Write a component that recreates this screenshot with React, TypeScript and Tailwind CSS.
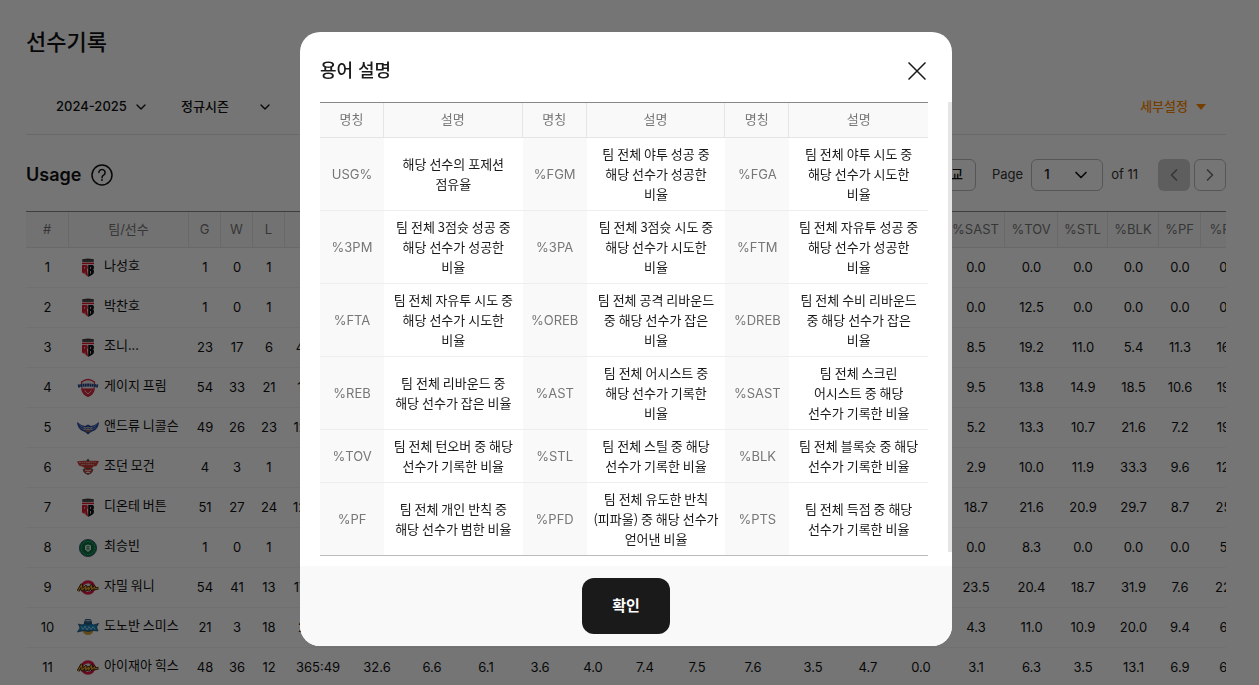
import { useState } from 'react';
import { ChevronDown, ChevronLeft, ChevronRight } from 'lucide-react';

type Team = 'sono' | 'phoebus' | 'kcc' | 'redboosters' | 'db' | 'knights' | 'lakers';

type Player = {
  rank: number;
  team: Team;
  name: string;
  stats: string[];
};

const COLUMNS: { label: string; width: string }[] = [
  { label: 'G', width: 'w-8' },
  { label: 'W', width: 'w-8' },
  { label: 'L', width: 'w-8' },
  { label: 'MIN', width: 'w-[66px]' },
  { label: 'USG%', width: 'w-[52px]' },
  { label: '%FGM', width: 'w-[58px]' },
  { label: '%FGA', width: 'w-[50px]' },
  { label: '%3PM', width: 'w-[58px]' },
  { label: '%3PA', width: 'w-[48px]' },
  { label: '%FTM', width: 'w-[56px]' },
  { label: '%FTA', width: 'w-[48px]' },
  { label: '%OREB', width: 'w-[64px]' },
  { label: '%DREB', width: 'w-[56px]' },
  { label: '%REB', width: 'w-[54px]' },
  { label: '%AST', width: 'w-[52px]' },
  { label: '%SAST', width: 'w-[58px]' },
  { label: '%TOV', width: 'w-[53px]' },
  { label: '%STL', width: 'w-[50px]' },
  { label: '%BLK', width: 'w-[51px]' },
  { label: '%PF', width: 'w-[42px]' },
  { label: '%PFD', width: 'w-[56px]' },
  { label: '%PTS', width: 'w-[56px]' },
];

const row = (rank: number, team: Team, name: string, stats: string): Player => ({
  rank,
  team,
  name,
  stats: stats.split(' '),
});

const PLAYERS: Player[] = [
  row(1, 'redboosters', '나성호', '1 0 1 1:12 50.0 0.0 9.1 0.0 0.0 0.0 0.0 0.0 0.0 0.0 0.0 0.0 0.0 0.0 0.0 0.0 0.0 0.0'),
  row(2, 'redboosters', '박찬호', '1 0 1 2:31 40.0 0.0 8.3 0.0 9.1 0.0 0.0 0.0 0.0 0.0 0.0 0.0 12.5 0.0 0.0 0.0 0.0 0.0'),
  row(3, 'redboosters', '조니...', '23 17 6 430:26 34.3 17.4 17.2 8.8 8.4 18.5 17.6 14.9 17.1 16.4 9.9 8.5 19.2 11.0 5.4 11.3 16.4 16.8'),
  row(4, 'phoebus', '게이지 프림', '54 33 21 1143:11 34.1 20.2 17.1 2.1 2.5 24.6 26.3 16.8 19.9 18.8 9.1 9.5 13.8 14.9 18.5 10.6 19.6 16.5'),
  row(5, 'kcc', '앤드류 니콜슨', '49 26 23 1228:36 33.9 24.3 21.9 19.7 16.4 21.2 18.8 11.6 21.3 18.4 5.8 5.2 13.3 10.7 21.6 7.2 19.2 23.1'),
  row(6, 'sono', '조던 모건', '4 3 1 31:17 33.5 14.8 13.9 0.0 0.0 9.5 12.1 12.8 14.6 14.0 4.2 2.9 10.0 11.9 33.3 9.6 12.4 11.7'),
  row(7, 'redboosters', '디온테 버튼', '51 27 24 1230:44 33.2 20.7 20.1 15.2 14.3 22.5 22.9 10.8 16.8 15.1 18.4 18.7 21.6 20.9 29.7 8.7 25.3 20.1'),
  row(8, 'db', '최승빈', '1 0 1 06:32 33.0 8.3 8.0 0.0 0.0 0.0 0.0 0.0 7.7 5.3 0.0 0.0 8.3 0.0 0.0 0.0 5.3 4.2'),
  row(9, 'knights', '자밀 워니', '54 41 13 1790:56 32.8 28.4 26.2 17.5 17.0 19.3 20.4 18.8 27.1 24.5 21.2 23.5 20.4 18.7 31.9 7.6 22.4 26.1'),
  row(10, 'lakers', '도노반 스미스', '21 3 18 221:07 32.7 8.1 8.4 2.2 2.8 6.7 8.0 7.9 7.6 7.7 4.6 4.3 11.0 10.9 20.0 9.4 6.8 7.4'),
  row(11, 'knights', '아이재아 힉스', '48 36 12 365:49 32.6 6.6 6.1 3.6 4.0 7.4 7.5 7.6 3.5 4.7 0.0 3.1 6.3 3.5 13.1 6.9 6.2 6.0'),
];

// 한 행에 [명칭, 설명] 세 쌍
const TERMS: [string, string][][] = [
  [
    ['USG%', '해당 선수의 포제션\n점유율'],
    ['%FGM', '팀 전체 야투 성공 중\n해당 선수가 성공한\n비율'],
    ['%FGA', '팀 전체 야투 시도 중\n해당 선수가 시도한\n비율'],
  ],
  [
    ['%3PM', '팀 전체 3점슛 성공 중\n해당 선수가 성공한\n비율'],
    ['%3PA', '팀 전체 3점슛 시도 중\n해당 선수가 시도한\n비율'],
    ['%FTM', '팀 전체 자유투 성공 중\n해당 선수가 성공한\n비율'],
  ],
  [
    ['%FTA', '팀 전체 자유투 시도 중\n해당 선수가 시도한\n비율'],
    ['%OREB', '팀 전체 공격 리바운드\n중 해당 선수가 잡은\n비율'],
    ['%DREB', '팀 전체 수비 리바운드\n중 해당 선수가 잡은\n비율'],
  ],
  [
    ['%REB', '팀 전체 리바운드 중\n해당 선수가 잡은 비율'],
    ['%AST', '팀 전체 어시스트 중\n해당 선수가 기록한\n비율'],
    ['%SAST', '팀 전체 스크린\n어시스트 중 해당\n선수가 기록한 비율'],
  ],
  [
    ['%TOV', '팀 전체 턴오버 중 해당\n선수가 기록한 비율'],
    ['%STL', '팀 전체 스틸 중 해당\n선수가 기록한 비율'],
    ['%BLK', '팀 전체 블록슛 중 해당\n선수가 기록한 비율'],
  ],
  [
    ['%PF', '팀 전체 개인 반칙 중\n해당 선수가 범한 비율'],
    ['%PFD', '팀 전체 유도한 반칙\n(피파울) 중 해당 선수가\n얻어낸 비율'],
    ['%PTS', '팀 전체 득점 중 해당\n선수가 기록한 비율'],
  ],
];

const TeamLogo = ({ team }: { team: Team }) => (
  <svg viewBox="0 0 22 22" className="size-[22px] shrink-0" aria-hidden="true">
    {team === 'redboosters' && (
      <>
        <path d="M5 2.500l2-.6 4-.4 4 .4 2 .6-.6 2.500H5.600z" fill="#333" />
        <path d="M6.500 3.300h9M6 4.400h10" stroke="#999" strokeWidth=".5" strokeDasharray="1 .6" />
        <path d="M5 5.600h12v1.600H5z" fill="#d9182d" />
        <path d="M5 8h4.400q1.400 0 1.400 2.400 0 1.600-.8 2.200l1 7L8.600 18l-.8-4.600v3.600L5 15.500z" fill="#d9182d" />
        <path d="M11.200 8h4.200q1.600 0 1.600 2.200 0 1.700-.8 2.200.8.5.8 2.300 0 2-1.800 3.100l-4 2.200z" fill="#111" />
        <path d="M7.700 9.800v2M13.500 9.800v2M13.500 14v2.600" stroke="#ddd" strokeWidth=".9" />
      </>
    )}
    {team === 'phoebus' && (
      <>
        <path d="M4.500 5Q11 0 17.500 5L17 13q-1 4-6 6.500Q6 17 5 13z" fill="#e8e8e8" stroke="#d4283c" strokeWidth="1.300" />
        <path d="M5 11.500h12q-.5 5-6 8-5.500-3-6-8z" fill="#d4283c" />
        <path d="M7.500 13.500l3.500 3.500 3.500-3.500" stroke="#eee" strokeWidth=".8" fill="none" />
        <path d="M1 9.200q10-1.800 20 0" stroke="#e8e8e8" strokeWidth="3.600" fill="none" />
        <path d="M1 9q10-1.800 20 0" stroke="#213d86" strokeWidth="3" strokeDasharray="1.800 .5" fill="none" />
      </>
    )}
    {team === 'kcc' && (
      <>
        <path d="M0 5q4 3.500 8 4l3-1.500L14 9q4-.5 8-4-.5 6-4.500 8.500L14 15l-3 2.500L8 15l-3.500-1.500Q.5 11 0 5z" fill="#294a9c" />
        <path d="M2 7.500q3 3 6 3M3.500 10.500q2 2 4.500 2M20 7.500q-3 3-6 3M18.500 10.500q-2 2-4.500 2" stroke="#9fb1dc" strokeWidth=".7" fill="none" />
        <circle cx="11" cy="12.500" r="2.800" fill="#8b6a52" />
        <path d="M7 10.500h8v2H7z" fill="#d8dbe4" />
        <path d="M7.500 11.500h7" stroke="#294a9c" strokeWidth="1" strokeDasharray="1 .5" />
      </>
    )}
    {team === 'sono' && (
      <>
        <path d="M9 4l2-2.500L13 4z" fill="#555" />
        <path d="M0 4.500q5-1 11-.5 6-.5 11 0L19.500 9l-3 .5L14 12H8L6.500 10 2 8.500z" fill="#c63b35" />
        <path d="M2 5.700q5-.8 9-.3 4-.5 8 0M4 7.800q7-1 13 0" stroke="#e3c3bd" strokeWidth=".9" strokeDasharray="1.600 .7" fill="none" />
        <path d="M6 12.500q5-3 10 0-.5 4-5 5-4.500-1-5-5z" fill="#c63b35" stroke="#555" strokeWidth=".8" />
        <path d="M8 13l3 1 3-1M9 15.500h4" stroke="#eee" strokeWidth=".9" fill="none" />
      </>
    )}
    {team === 'db' && (
      <>
        <circle cx="11" cy="11" r="8.600" fill="#087a46" stroke="#29405c" strokeWidth=".8" />
        <circle cx="11" cy="11" r="6.800" fill="none" stroke="#7cc1a0" strokeWidth=".8" strokeDasharray=".8 1" />
        <circle cx="11" cy="11" r="5.200" fill="#0b6b3f" />
        <path d="M8 8.500l3-1 3 1v4l-3 2.500-3-2.500z" fill="#dfe9e4" />
        <path d="M9 9.800h4M9 11.800h4M11 8.500v5" stroke="#087a46" strokeWidth=".7" />
      </>
    )}
    {team === 'knights' && (
      <>
        <circle cx="11" cy="10.500" r="6" fill="#e9e4e4" stroke="#df1743" strokeWidth="2.600" />
        <path d="M7.500 7q3.500-2 7 0M7.500 14.500q3.500 2 7 0" stroke="#df1743" strokeWidth=".8" fill="none" />
        <path d="M1 14l3.500-6 .5 5 4-3.500-.5 3.500 3-2.500v2.500l3-4.500.2 4 2.800-2.500.5 2 3.500-1" stroke="#2d1d17" strokeWidth="2.800" fill="none" strokeLinejoin="round" />
        <path d="M1 14l3.500-6 .5 5 4-3.500-.5 3.500 3-2.500v2.500l3-4.500.2 4 2.800-2.500.5 2 3.500-1" stroke="#eda525" strokeWidth="1.200" fill="none" strokeLinejoin="round" />
      </>
    )}
    {team === 'lakers' && (
      <>
        <path d="M7 4.500l1.500-2.500h5L15 4.500v4H7z" fill="#386086" />
        <path d="M8.500 3.700h5" stroke="#c5d7e3" strokeWidth="1" />
        <circle cx="11" cy="12.500" r="5.500" fill="#d6a23c" />
        <path d="M1.500 7L5 8l3-1.500 3 1 3-1L16.500 8l5-1.500L19.500 10l1.500 4-5-.5-5 1-4-1L.5 15 3 11z" fill="#1682bd" stroke="#173c60" strokeWidth=".7" />
        <path d="M4 9.500l2 3 2-3.500 2 4 2-3.500 2 3 2-3 2 3" stroke="#b3ddea" strokeWidth=".8" fill="none" />
      </>
    )}
  </svg>
);

const PlayerTable = () => (
  <div className="overflow-hidden">
    <table className="w-[1287px] table-fixed border-separate border-spacing-0 border-t border-[#888] text-center text-[13px]">
      <thead>
        <tr className="h-9 bg-[#f9f9f9] text-[#777]">
          <th className="w-[43px] border-r border-b border-[#e5e5e5] font-normal">#</th>
          <th className="w-[120px] border-r border-b border-[#e5e5e5] font-normal">팀/선수</th>
          {COLUMNS.map((col) => (
            <th key={col.label} className={`${col.width} border-r border-b border-[#e5e5e5] font-normal`}>
              {col.label}
            </th>
          ))}
        </tr>
      </thead>
      <tbody>
        {PLAYERS.map((player) => (
          <tr key={player.rank} className="h-10 text-[#111]">
            <td className="border-b border-[#f5f5f5]">{player.rank}</td>
            <td className="border-b border-[#f5f5f5] pl-2">
              <a href="#player" className="flex items-center gap-[5px] font-['Noto_Sans_CJK_KR',sans-serif] whitespace-nowrap">
                <TeamLogo team={player.team} />
                <span className="pb-1.5">{player.name}</span>
              </a>
            </td>
            {player.stats.map((value, i) => (
              <td key={COLUMNS[i].label} className="border-b border-[#f5f5f5]">{value}</td>
            ))}
          </tr>
        ))}
      </tbody>
    </table>
  </div>
);

const TermsModal = ({ onClose }: { onClose: () => void }) => (
  <div className="fixed inset-0 flex items-start justify-center bg-black/54 pt-8 pr-[7px]">
    <div
      role="dialog"
      aria-modal="true"
      aria-labelledby="terms-title"
      className="w-[652px] overflow-hidden rounded-[20px] bg-white text-[#1a1a1a]"
    >
      <header className="flex h-[70px] items-center justify-between px-5 pt-2">
        <h2 id="terms-title" className="text-lg font-medium">용어 설명</h2>
        <button onClick={onClose} aria-label="닫기" className="p-1.5">
          <svg viewBox="0 0 18 18" className="size-[18px]" fill="none" stroke="#1a1a1a" strokeWidth="1.500">
            <path d="M.5.5l17 17M17.500.5l-17 17" />
          </svg>
        </button>
      </header>

      <div className="relative pr-6 pb-2.5 pl-5">
        <table className="w-full table-fixed border-separate border-spacing-0 border-t border-b border-t-[#888] border-b-[#bbb] text-center text-[13px] leading-5">
          <thead>
            <tr className="h-[35px] bg-[#f9f9f9] font-['Noto_Sans_CJK_KR',sans-serif] text-[#777]">
              {[0, 1, 2].map((i) => [
                <th key={`name-${i}`} className="w-16 border-r border-b border-[#e5e5e5] pb-0.5 font-normal">명칭</th>,
                <th
                  key={`desc-${i}`}
                  className={`border-b border-[#e5e5e5] pb-0.5 font-normal ${i < 2 ? 'border-r' : ''}`}
                >
                  설명
                </th>,
              ])}
            </tr>
          </thead>
          <tbody>
            {TERMS.map((terms, i) => {
              const line = i < TERMS.length - 1 ? 'border-b border-[#eee]' : '';
              return (
                <tr key={terms[0][0]}>
                  {terms.map(([name, desc]) => [
                    <th key={name} className={`bg-[#f9f9f9] font-normal text-[#777] ${line}`}>{name}</th>,
                    <td
                      key={`${name}-desc`}
                      className={`py-1.5 font-['Noto_Sans_CJK_KR',sans-serif] whitespace-pre-line ${line}`}
                    >
                      {desc}
                    </td>,
                  ])}
                </tr>
              );
            })}
          </tbody>
        </table>
        {/* 스크롤 표시 */}
        <div className="absolute top-0 right-0 bottom-3.5 w-1 bg-[#e5e5e5]" />
      </div>

      <footer className="flex justify-center bg-[#f9f9f9] py-3">
        <button onClick={onClose} className="h-14 w-[88px] rounded-xl bg-[#1a1a1a] text-[15px] font-bold text-white">
          확인
        </button>
      </footer>
    </div>
  </div>
);

export default function App() {
  const [open, setOpen] = useState(true);

  return (
    <div className="h-screen overflow-hidden bg-white font-['Inter','Noto_Sans_CJK_KR',sans-serif] text-[#111]">
      <main className="pt-6 pr-[33px] pl-[26px]">
        <h1 className="text-[22px] leading-9 font-medium">선수기록</h1>

        {/* --- 필터 --- */}
        <div className="mt-5 flex h-[55px] items-center justify-between border-b border-[#e5e5e5] pr-5 pl-[30px] text-[13px] font-medium">
          <div className="flex items-center gap-8">
            <label className="relative flex items-center">
              <select aria-label="시즌" className="w-[93px] appearance-none">
                <option>2024-2025</option>
              </select>
              <ChevronDown size={16} strokeWidth={2} className="pointer-events-none absolute right-0" />
            </label>
            <label className="relative flex items-center">
              <select aria-label="시즌 구분" className="w-[92px] appearance-none">
                <option>정규시즌</option>
              </select>
              <ChevronDown size={16} strokeWidth={2} className="pointer-events-none absolute right-0" />
            </label>
          </div>
          <button className="flex items-center gap-2 text-[#ff8a00]">
            세부설정
            <svg viewBox="0 0 10 6" className="h-1.5 w-2.5" fill="currentColor">
              <path d="M0 0h10L5 6z" />
            </svg>
          </button>
        </div>

        {/* --- 제목 / 페이지 이동 --- */}
        <div className="flex h-[76px] items-center justify-between pt-1">
          <div className="flex items-center gap-2.5">
            <h2 className="text-lg font-semibold">Usage</h2>
            <button onClick={() => setOpen(true)} aria-label="용어 설명">
              <svg viewBox="0 0 22 22" className="size-[22px]" fill="none" stroke="#111" strokeWidth="1.500">
                <circle cx="11" cy="11" r="10" />
                <path d="M7.900 8.600a3.100 3.100 0 1 1 4.700 2.600q-1.600.9-1.600 2.500" strokeLinecap="round" />
                <circle cx="11" cy="16" r=".6" fill="#111" strokeWidth=".8" />
              </svg>
            </button>
          </div>
          <div className="flex items-center text-[13px] text-[#333]">
            <button className="h-8 rounded-md border border-[#bbb] px-3 font-medium text-[#111]">비교</button>
            <label htmlFor="page" className="ml-4">Page</label>
            <div className="relative ml-2 flex items-center">
              <select id="page" className="h-8 w-[72px] appearance-none rounded-md border border-[#bbb] px-3 font-medium text-[#111]">
                <option>1</option>
              </select>
              <ChevronDown size={20} strokeWidth={2} className="pointer-events-none absolute right-3 text-[#111]" />
            </div>
            <span className="ml-2">of 11</span>
            <button disabled aria-label="이전" className="ml-5 flex size-8 items-center justify-center rounded-md bg-[#ccc] text-[#777]">
              <ChevronLeft size={20} strokeWidth={2} />
            </button>
            <button aria-label="다음" className="ml-1 flex size-8 items-center justify-center rounded-md border border-[#bbb] text-[#777]">
              <ChevronRight size={20} strokeWidth={2} />
            </button>
          </div>
        </div>

        <PlayerTable />
      </main>

      {open && <TermsModal onClose={() => setOpen(false)} />}
    </div>
  );
}
